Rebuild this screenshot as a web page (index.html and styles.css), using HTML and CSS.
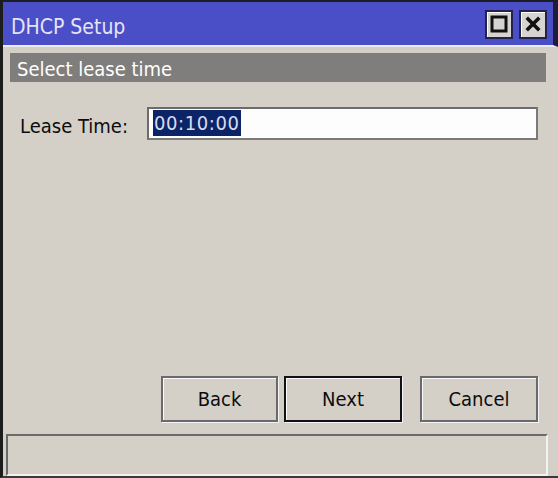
FILE: index.html
```html
<!DOCTYPE html>
<html>
<head>
<meta charset="utf-8">
<title>DHCP Setup</title>
<link rel="stylesheet" href="styles.css">
</head>
<body>
<div class="window">
  <div class="titlebar">
    <span class="title">DHCP Setup</span>
    <div class="title-buttons">
      <button class="tbtn" aria-label="Maximize">
        <svg width="18" height="18" viewBox="0 0 18 18"><rect x="2" y="2" width="14" height="14" fill="none" stroke="#111" stroke-width="3"/></svg>
      </button>
      <button class="tbtn" aria-label="Close">
        <svg width="18" height="18" viewBox="0 0 18 18"><path d="M4 4 L14 14 M14 4 L4 14" stroke="#111" stroke-width="3.6" stroke-linecap="square"/></svg>
      </button>
    </div>
  </div>
  <div class="body">
    <div class="section-header">Select lease time</div>
    <div class="field-row">
      <label class="field-label">Lease Time:</label>
      <div class="input"><span class="selected">00:10:00</span></div>
    </div>
    <div class="spacer"></div>
    <div class="actions">
      <button class="btn">Back</button>
      <button class="btn btn-default">Next</button>
      <button class="btn btn-cancel">Cancel</button>
    </div>
    <div class="statusbar"></div>
  </div>
</div>
</body>
</html>
```
FILE: styles.css
```css
* { box-sizing: border-box; }
html, body { margin: 0; padding: 0; }
body {
  width: 558px;
  height: 478px;
  overflow: hidden;
  background: #d4d0c8;
  font-family: "DejaVu Sans Condensed", "DejaVu Sans", sans-serif;
}
.window {
  width: 558px;
  height: 478px;
  display: flex;
  flex-direction: column;
  border-top: 2px solid #1c1c24;
  border-left: 3px solid #1c1c1c;
  border-bottom: 2px solid #3a3a3a;
  background: #d4d0c8;
}
.titlebar {
  height: 45px;
  flex: none;
  display: flex;
  align-items: center;
  justify-content: space-between;
  background: #4b4fc7;
  border-right: 5px solid #1e1e3a;
  border-bottom: 2px solid #eeeef0;
  padding-left: 8px;
}
.title {
  color: #e4e4f4;
  font-size: 21px;
  padding-top: 6px;
}
.title-buttons {
  display: flex;
  gap: 6px;
  padding-right: 6px;
  padding-top: 1px;
}
.tbtn {
  width: 28px;
  height: 29px;
  padding: 0;
  margin: 0;
  display: flex;
  align-items: center;
  justify-content: center;
  background: #d6d4d0;
  border: 2px solid #22224a;
  box-shadow: inset 1px 1px 0 #ffffff;
}
.body {
  flex: 1;
  display: flex;
  flex-direction: column;
}
.section-header {
  margin: 6px 12px 0 7px;
  height: 29px;
  background: #7f7e7c;
  color: #ffffff;
  font-size: 20px;
  padding: 3px 0 0 7px;
  line-height: 26px;
}
.field-row {
  display: flex;
  align-items: center;
  margin: 25px 20px 0 17px;
  height: 33px;
}
.field-label {
  width: 127px;
  flex: none;
  font-size: 20px;
  color: #0c0c0c;
  padding-top: 4px;
}
.input {
  flex: 1;
  height: 33px;
  background: #fdfdfd;
  border: 2px solid #6c6c6c;
  border-right-color: #7a7a7a;
  border-bottom-color: #7a7a7a;
  padding: 1px 0 0 4px;
  display: flex;
  align-items: flex-start;
}
.selected {
  background: #0b2468;
  color: #d8dcec;
  font-size: 20px;
  line-height: 26px;
  padding: 0 1px;
  letter-spacing: 0.6px;
}
.spacer { flex: 1; }
.actions {
  display: flex;
  justify-content: flex-end;
  padding-right: 20px;
  margin-bottom: 12px;
}
.btn {
  width: 117px;
  height: 46px;
  margin: 0;
  padding: 0;
  background: #d4d0c8;
  font-family: inherit;
  font-size: 20px;
  color: #0c0c0c;
  border: 2px solid #6a6a6a;
  box-shadow: inset 1px 1px 0 #fafafa, 1px 1px 0 #f4f4f4;
}
.btn-default {
  width: 118px;
  margin-left: 6px;
  border: 2px solid #121212;
}
.btn-cancel {
  width: 118px;
  margin-left: 18px;
}
.statusbar {
  height: 42px;
  flex: none;
  margin: 0 10px 0 3px;
  border-top: 2px solid #6a6a68;
  border-left: 2px solid #6a6a68;
  border-right: 2px solid #f2f2ee;
  border-bottom: 2px solid #f2f2ee;
  background: #d4d0c8;
}
```
